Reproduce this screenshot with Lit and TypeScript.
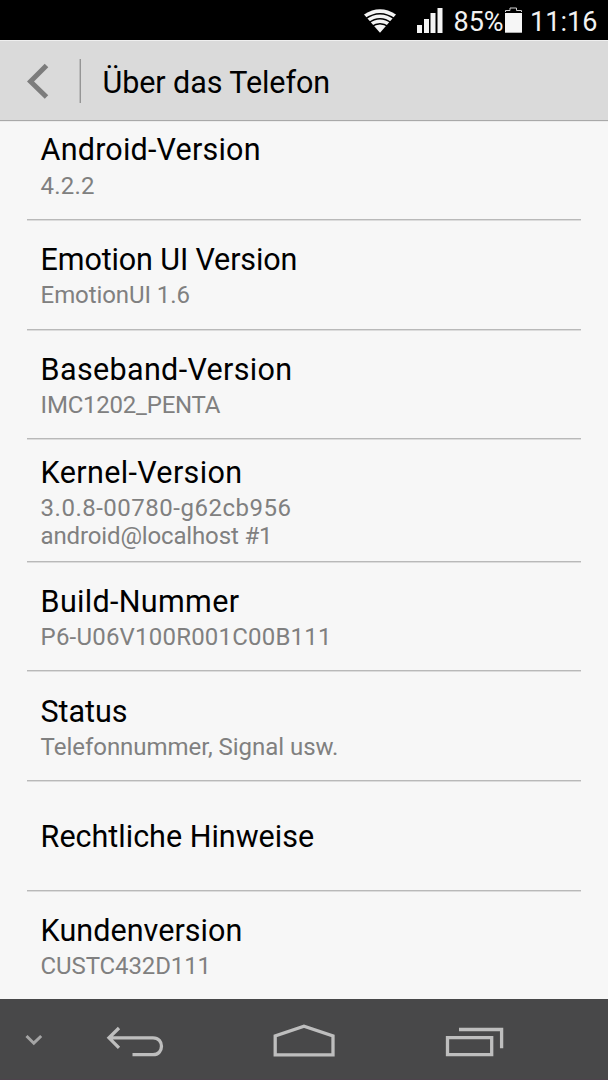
import { LitElement, html, css, svg } from "lit";
import { customElement } from "lit/decorators.js";
import { styleMap } from "lit/directives/style-map.js";

interface Line { text: string; track?: number }
interface Item { title: Line; lines: Line[]; height: number; pad: number }

const ITEMS: Item[] = [
  { title: { text: "Android-Version", track: 0.2 }, lines: [{ text: "4.2.2", track: 0.2 }], height: 110, pad: 22 },
  { title: { text: "Emotion UI Version", track: -0.13 }, lines: [{ text: "EmotionUI 1.6", track: -0.08 }], height: 110, pad: 22 },
  { title: { text: "Baseband-Version", track: 0.35 }, lines: [{ text: "IMC1202_PENTA", track: -0.22 }], height: 109, pad: 22 },
  { title: { text: "Kernel-Version", track: 0.36 }, lines: [{ text: "3.0.8-00780-g62cb956", track: 0.5 }, { text: "android@localhost #1", track: -0.145 }], height: 123, pad: 16 },
  { title: { text: "Build-Nummer", track: 0.32 }, lines: [{ text: "P6-U06V100R001C00B111", track: 0.2 }], height: 109, pad: 22 },
  { title: { text: "Status", track: -0.08 }, lines: [{ text: "Telefonnummer, Signal usw.", track: -0.03 }], height: 110, pad: 23 },
  { title: { text: "Rechtliche Hinweise", track: 0 }, lines: [], height: 110, pad: 38 },
  { title: { text: "Kundenversion", track: 0.05 }, lines: [{ text: "CUSTC432D111", track: -0.12 }], height: 110, pad: 22 },
];

const track = (l: Line) => styleMap({ letterSpacing: `${l.track ?? 0}px` });

@customElement("status-bar")
class StatusBar extends LitElement {
  static styles = css`
    :host { display: flex; height: 40px; background: #000; color: #f2f2f2; font-size: 27px; line-height: 44px; justify-content: flex-end; padding-right: 10px; white-space: nowrap; }
    svg { display: block; flex: none; }
    .level { width: 50px; margin-left: 10.5px; }
    .battery { margin-left: 0.5px; }
    .clock { width: 68px; margin-left: 7px; letter-spacing: 0.05px; }
  `;
  render() {
    return html`
      <svg width="80" height="40" viewBox="363 0 80 40">
        <path d="M364 14.500Q380 4 396 14.500L380 32.700Z" fill="#f4f4f4" />
        <g fill="none" stroke="#000" stroke-width="1.5">
          <path d="M365 19.200Q380 8.500 395 19.200" />
          <path d="M368.500 23Q380 14.700 391.500 23" />
          <path d="M371.500 26.700Q380 20.700 388.500 26.700" />
        </g>
        <path d="M417 25h5v8h-5zM424 19h5v14h-5zM430.500 13h5v20h-5zM437.500 8h5v25h-5z" fill="#f4f4f4" />
      </svg>
      <span class="level">85%</span>
      <svg class="battery" width="19" height="40" viewBox="504 0 19 40">
        <path d="M505.500 12v-1.500h4.500v-2.500h6.500v2.500h5v1.500" fill="none" stroke="#d0d0d0" />
        <path d="M505 13h17v19.700h-17z" fill="#f6f6f6" />
      </svg>
      <span class="clock">11:16</span>
    `;
  }
}

@customElement("title-bar")
class TitleBar extends LitElement {
  static styles = css`
    :host { display: flex; align-items: center; box-sizing: border-box; height: 82px; padding-left: 27px; background: #dadada; border-top: 1px solid #efefef; border-bottom: 1px solid #ececec; box-shadow: inset 0 -1px #a9a9a9; color: #000; }
    .rule { width: 1px; height: 44px; margin: 0 21.5px 0 31px; background: #959595; box-shadow: -1px 0 #bcbcbc; }
    .title { font-size: 30.5px; line-height: 36px; margin-top: 3px; letter-spacing: -0.08px; }
  `;
  render() {
    return html`
      <svg width="22" height="36" viewBox="0 0 22 36"><path d="M19.500 2.500L3.500 18.500L19.500 34" fill="none" stroke="#7c7c7c" stroke-width="5" /></svg>
      <span class="rule"></span><span class="title">Über das Telefon</span>
    `;
  }
}

@customElement("nav-bar")
class NavBar extends LitElement {
  static styles = css`
    :host { display: block; height: 81px; background: #484849; box-shadow: inset 0 -1px #4d434c; }
    svg { display: block; }
  `;
  render() {
    return html`<svg width="608" height="81" viewBox="0 999 608 81" fill="none" stroke="#bebebe" stroke-width="3.3">
      ${svg`
        <path d="M26.500 1036L33.800 1043.200L41.200 1036" stroke="#a5a5a5" stroke-width="3" />
        <path d="M119 1028L109 1037.800L119 1047.800M110 1037.800H153C164.300 1037.800 164.300 1054.700 153 1054.700H132.500" />
        <path d="M275.200 1054.800V1036L304 1026.300L333 1036V1054.800Z" />
        <path d="M447.500 1037.700h44.200v17h-44.200zM459 1029.500h42.600v18.700" />
      `}
    </svg>`;
  }
}

@customElement("app-root")
class AppRoot extends LitElement {
  static styles = css`
    :host { display: flex; flex-direction: column; height: 1080px; overflow: hidden; background: #f7f7f7; font-family: Roboto, sans-serif; font-kerning: normal; }
    status-bar, title-bar, nav-bar { flex: none; }
    .list { flex: 1; min-height: 0; overflow: hidden; padding: 0 27px; }
    .scroll { margin-top: -12px; }
    .item { box-sizing: border-box; padding-left: 13.6px; border-bottom: 1px solid #b9b9b9; box-shadow: 0 1px #dcdcdc; }
    .name { font-size: 30.5px; line-height: 36px; color: #000; margin-bottom: 3px; }
    .detail { font-size: 24px; line-height: 28px; color: #808080; }
    .item:first-child .name { margin-bottom: 4px; }
  `;
  render() {
    return html`
      <status-bar></status-bar>
      <title-bar></title-bar>
      <div class="list"><div class="scroll">
        ${ITEMS.map((i) => html`
          <div class="item" style=${styleMap({ height: `${i.height}px`, paddingTop: `${i.pad}px` })}>
            <div class="name" style=${track(i.title)}>${i.title.text}</div>
            ${i.lines.map((l) => html`<div class="detail" style=${track(l)}>${l.text}</div>`)}
          </div>`)}
      </div></div>
      <nav-bar></nav-bar>
    `;
  }
}
